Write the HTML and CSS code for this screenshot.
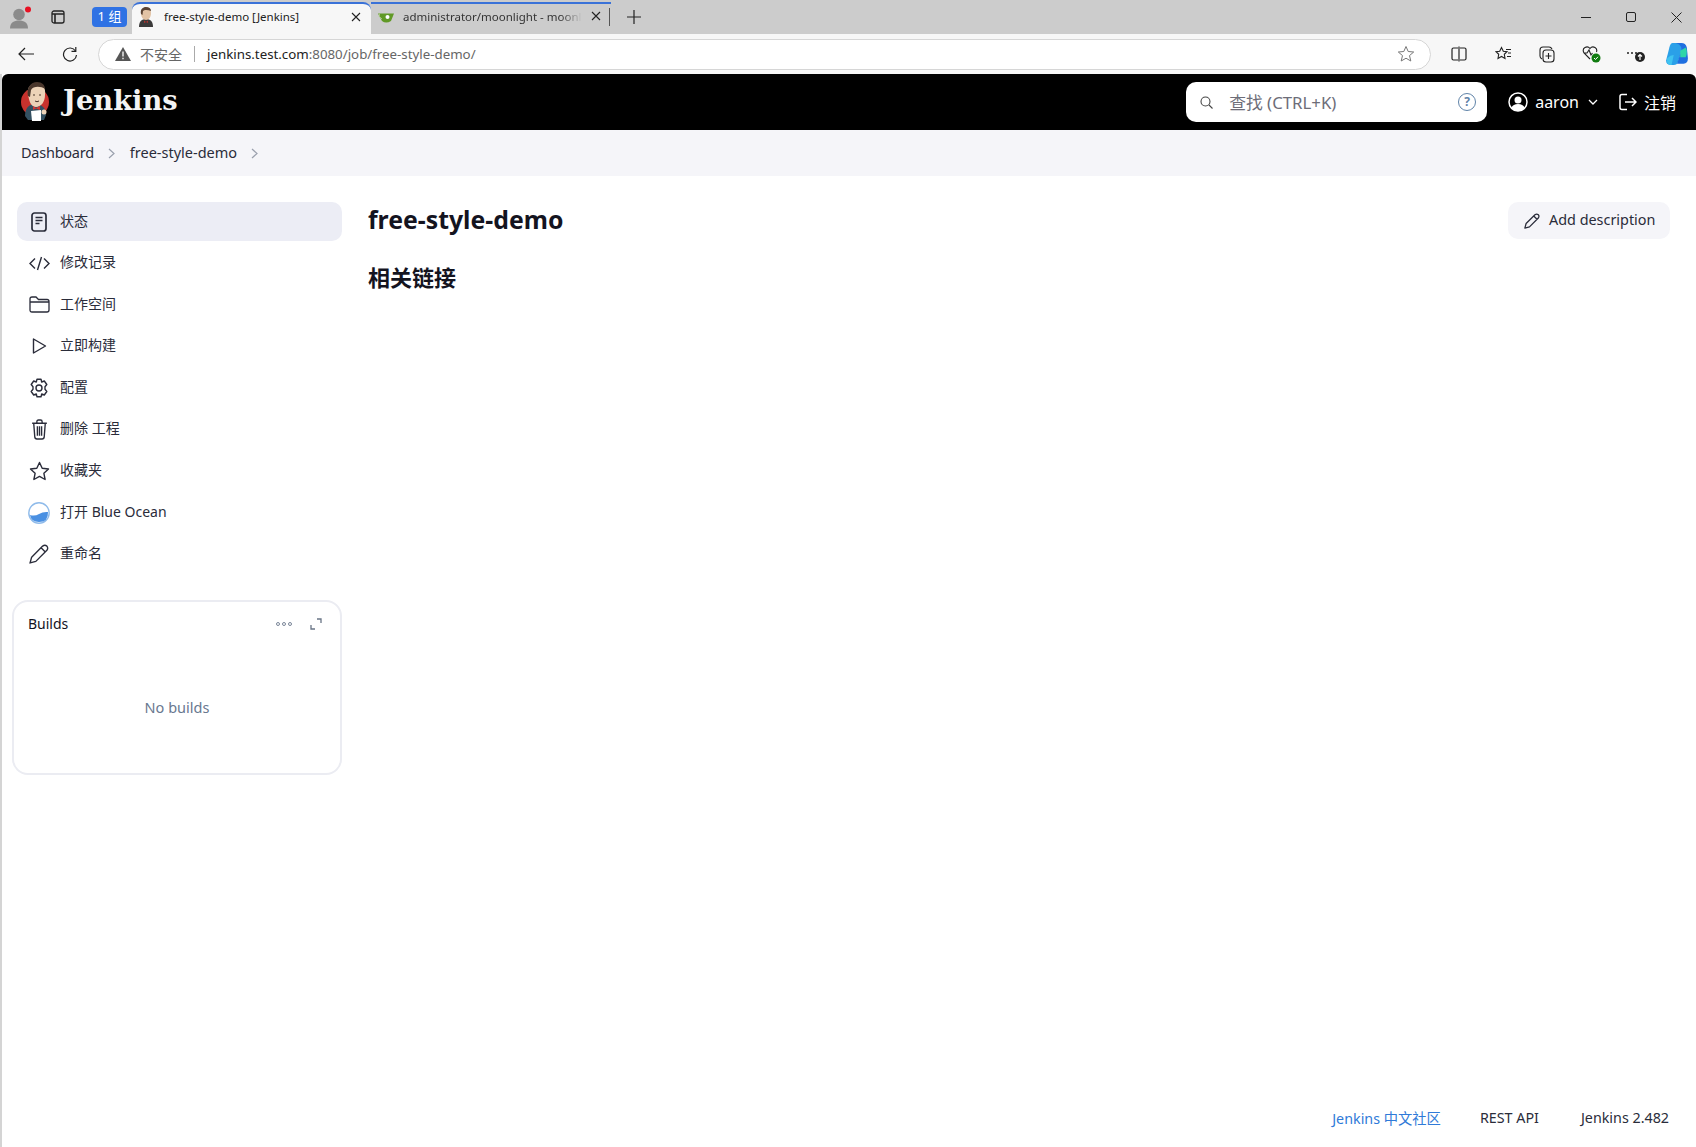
FILE: index.html
```html
<!DOCTYPE html>
<html lang="zh">
<head>
<meta charset="utf-8">
<title>free-style-demo [Jenkins]</title>
<link rel="stylesheet" href="styles.css">
</head>
<body>
<svg class="defs" width="0" height="0" aria-hidden="true">
  <symbol id="butler" viewBox="0 0 32 40">
    <circle cx="15" cy="20" r="14" fill="#c8322d"/>
    <path d="M5 34 C5 26 9 22 15 22 C22 22 26 26 26 33 L24 38 L8 38Z" fill="#335061"/>
    <path d="M8 12 C7 5 11 1 17 1 C23 1 26 6 25 13 C25 20 21 25 16 25 C11 25 9 19 8 12Z" fill="#ecd3b8"/>
    <path d="M8 14 C6 6 11 0 17 0 C22 0 25 3 25 7 C21 4 13 4 11 8 L10 15Z" fill="#49362b"/>
    <path d="M13 24 L16 26 L20 24 L20 28 L16 26.500 L13 28Z" fill="#d33833"/>
    <path d="M11 29 L21 28 L21 39 L12 39Z" fill="#fff"/>
    <circle cx="24" cy="30" r="2.500" fill="#ecd3b8"/>
    <path d="M13 13 h2 M19 13 h2 M15 19 q2 1.500 4 0" stroke="#49362b" stroke-width="1" fill="none"/>
  </symbol>
  <symbol id="butler-small" viewBox="0 0 16 20">
    <path d="M1 20 C1 14 4 12 8 12 C12 12 15 14 15 20Z" fill="#3b3a3a"/>
    <path d="M3 6 C3 2 5 .5 8 .5 C11 .5 13 2 13 6 C13 10 11 13 8 13 C5 13 3 10 3 6Z" fill="#e2c3a5"/>
    <path d="M3 7 C2 2 5 0 8 0 C11 0 13 1.500 13 4 C10 2.500 6 2.500 5 4 L4.500 8Z" fill="#5a4334"/>
    <path d="M6 13.500 L8 15 L10 13.500 V16 L8 15 L6 16Z" fill="#b3332e"/>
  </symbol>
</svg>

<div class="browser">
  <div class="tabstrip">
    <div class="strip-left">
      <span class="profile">
        <svg width="24" height="27" viewBox="0 0 24 26"><circle cx="10" cy="10" r="5.800" fill="#8b8b8b"/><path d="M1 24 C1 18 5 16 10 16 C15 16 19 18 19 24Z" fill="#8b8b8b"/><circle cx="19" cy="5" r="3" fill="#e81123"/></svg>
      </span>
      <span class="vtabs">
        <svg width="14" height="14" viewBox="0 0 14 14"><rect x="1" y="1" width="12" height="12" rx="2" fill="none" stroke="#222" stroke-width="1.300"/><path d="M1 4 H13 M4 4 V13" stroke="#222" stroke-width="1.600"/></svg>
      </span>
    </div>
    <div class="tabgroup">
      <span class="chip">1 组</span>
      <div class="tab tab-active">
        <svg class="favicon" width="16" height="20"><use href="#butler-small"/></svg>
        <span class="tab-title">free-style-demo [Jenkins]</span>
        <svg class="tabclose" width="10" height="10" viewBox="0 0 10 10"><path d="M1 1 L9 9 M9 1 L1 9" stroke="#222" stroke-width="1.100"/></svg>
      </div>
      <div class="tab tab-idle">
        <svg class="favicon" width="16" height="12" viewBox="0 0 16 12"><path d="M0 1.500 L16 1.500 L13 9 Q8 12 4 9Z" fill="#609926"/><path d="M1.500 1.500 Q0 5 4 7" fill="none" stroke="#a5c97c"/><circle cx="9.500" cy="5" r="2" fill="#fff"/></svg>
        <span class="tab-title fade">administrator/moonlight - moonl</span>
        <svg class="tabclose" width="10" height="10" viewBox="0 0 10 10"><path d="M1 1 L9 9 M9 1 L1 9" stroke="#222" stroke-width="1.100"/></svg>
      </div>
    </div>
    <span class="tabsep"></span>
    <svg class="newtab" width="14" height="14" viewBox="0 0 14 14"><path d="M7 0 V14 M0 7 H14" stroke="#222" stroke-width="1.200"/></svg>
    <div class="winctl">
      <svg width="10" height="10" viewBox="0 0 10 10"><path d="M0 5.500 H10" stroke="#222"/></svg>
      <svg width="10" height="10" viewBox="0 0 10 10"><rect x=".5" y=".5" width="9" height="9" rx="1.500" fill="none" stroke="#222"/></svg>
      <svg width="11" height="11" viewBox="0 0 11 11"><path d="M.5 .5 L10.500 10.500 M10.500 .5 L.5 10.500" stroke="#222"/></svg>
    </div>
  </div>

  <div class="addrbar">
    <svg class="nav-back" width="16" height="14" viewBox="0 0 16 14"><path d="M7 1 L1 7 L7 13 M1 7 H16" fill="none" stroke="#222" stroke-width="1.200"/></svg>
    <svg class="nav-reload" width="16" height="16" viewBox="0 0 16 16"><path d="M13.500 5 A6.500 6.500 0 1 0 14.500 9" fill="none" stroke="#222" stroke-width="1.200"/><path d="M13.800 1 V5.300 H9.500" fill="none" stroke="#222" stroke-width="1.200"/></svg>
    <div class="omnibox">
      <svg class="warn" width="16" height="14" viewBox="0 0 16 14"><path d="M8 0 L16 14 H0Z" fill="#555"/><path d="M8 4.500 V9.500 M8 10.800 V12.300" stroke="#fff" stroke-width="1.300"/></svg>
      <span class="insecure">不安全</span>
      <span class="omnisep"></span>
      <span class="url"><span class="url-host">jenkins.test.com</span>:8080/job/free-style-demo/</span>
      <svg class="omnistar" width="18" height="18" viewBox="0 0 18 18"><path d="M9 1.500 L11.200 6.500 L16.700 7 L12.500 10.600 L13.800 16 L9 13.200 L4.200 16 L5.500 10.600 L1.300 7 L6.800 6.500Z" fill="none" stroke="#777" stroke-width="1"/></svg>
    </div>
    <div class="tools">
      <svg width="16" height="16" viewBox="0 0 16 16"><path d="M7 2 H2.500 Q1 2 1 3.500 V12.500 Q1 14 2.500 14 H7 M9 2 H13.500 Q15 2 15 3.500 V12.500 Q15 14 13.500 14 H9 M8 .5 V15.500" fill="none" stroke="#222" stroke-width="1.200"/></svg>
      <svg width="17" height="16" viewBox="0 0 17 16"><path d="M6.500 1.500 L8.300 5.300 L12 5.700 L9.300 8.300 L10 12.500 L6.500 10.500 L3 12.500 L3.700 8.300 L1 5.700 L4.700 5.300Z" fill="none" stroke="#222" stroke-width="1.100"/><path d="M11 3.500 H16 M13 7 H16 M12 10.500 H16" stroke="#222" stroke-width="1.100"/></svg>
      <svg width="16" height="17" viewBox="0 0 16 17"><path d="M3 13 Q1 12 1 10 V4 Q1 1 4 1 H10 Q12 1 13 3" fill="none" stroke="#222" stroke-width="1.100"/><rect x="4" y="4" width="11" height="12" rx="3" fill="none" stroke="#222" stroke-width="1.100"/><path d="M9.500 7 V13 M6.500 10 H12.500" stroke="#222" stroke-width="1.100"/></svg>
      <svg width="19" height="18" viewBox="0 0 19 18"><path d="M8 14 L2 8 Q0 4 3 2.500 Q6 1 8 3.500 Q10 1 13 2.500 Q15.500 4 14.500 7 M2 8 H5 L7 5 L9 10 L10.500 8" fill="none" stroke="#222" stroke-width="1.100"/><circle cx="14" cy="13" r="4.500" fill="#107c10"/><path d="M12 13 L13.500 14.500 L16 11.800" fill="none" stroke="#fff"/></svg>
      <svg width="19" height="16" viewBox="0 0 19 16"><circle cx="2" cy="7" r="1" fill="#222"/><circle cx="6" cy="7" r="1" fill="#222"/><circle cx="10" cy="7" r="1" fill="#222"/><circle cx="14" cy="11" r="5" fill="#222"/><path d="M14 14 V8.500 M12 10.500 L14 8.500 L16 10.500" fill="none" stroke="#fff" stroke-width="1.200"/></svg>
      <svg width="24" height="24" viewBox="0 0 22 22"><path d="M7 1 H13 Q16 1 16.500 4 L12 18 Q11 21 8 21 H5 Q1 21 1 17 L4 5 Q5 1 7 1Z" fill="#2aa0e8"/><path d="M10 1 H15 Q19 1 20 5 L21 15 Q21 20 17 20 H11 L15 8 Q16 3 10 1Z" fill="#1f6fe0"/><path d="M14 8 L19 5 Q21 9 19 14 L14 14Z" fill="#2fd6a8"/><path d="M2 15 Q5 12 8 12 L6 21 H4 Q1 20 2 15Z" fill="#3fc3f0"/></svg>
    </div>
  </div>
</div>

<div class="page">
  <header class="jheader">
    <a class="brand">
      <svg width="32" height="40"><use href="#butler"/></svg>
      <span class="wordmark">Jenkins</span>
    </a>
    <div class="search">
      <svg class="search-ico" width="13" height="13" viewBox="0 0 13 13"><circle cx="5.500" cy="5.500" r="4.500" fill="none" stroke="#444" stroke-width="1.100"/><path d="M9 9 L12.500 12.500" stroke="#444" stroke-width="1.100"/></svg>
      <span class="placeholder">查找 (CTRL+K)</span>
      <span class="help">?</span>
    </div>
    <div class="user">
      <svg width="20" height="20" viewBox="0 0 20 20"><circle cx="10" cy="10" r="9" fill="none" stroke="#fff" stroke-width="1.500"/><circle cx="10" cy="8" r="3.500" fill="#fff"/><path d="M3.500 15.500 Q5 12 10 12 Q15 12 16.500 15.500 Q14 19 10 19 Q6 19 3.500 15.500Z" fill="#fff"/></svg>
      <span class="username">aaron</span>
      <svg width="10" height="6" viewBox="0 0 10 6"><path d="M1 1 L5 5 L9 1" fill="none" stroke="#fff" stroke-width="1.300"/></svg>
    </div>
    <div class="logout">
      <svg width="18" height="18" viewBox="0 0 18 18"><path d="M8 1.500 H3 Q1 1.500 1 3.500 V14.500 Q1 16.500 3 16.500 H8" fill="none" stroke="#fff" stroke-width="1.500"/><path d="M6 9 H17 M13 5 L17 9 L13 13" fill="none" stroke="#fff" stroke-width="1.500"/></svg>
      <span>注销</span>
    </div>
  </header>

  <nav class="crumbs">
    <span class="crumb-first">Dashboard</span>
    <svg class="crumb-chev" width="7" height="11" viewBox="0 0 7 11"><path d="M1 1 L6 5.500 L1 10" fill="none" stroke="#9aa0ad" stroke-width="1.200"/></svg>
    <span>free-style-demo</span>
    <svg class="crumb-chev" width="7" height="11" viewBox="0 0 7 11"><path d="M1 1 L6 5.500 L1 10" fill="none" stroke="#9aa0ad" stroke-width="1.200"/></svg>
  </nav>

  <div class="content">
    <aside class="side">
      <ul class="menu">
        <li class="item item-active">
          <span class="ico"><svg width="16" height="20" viewBox="0 0 16 20"><rect x="1" y="1" width="14" height="18" rx="2.500" fill="none" stroke="#2a2c3a" stroke-width="1.700"/><path d="M4.500 5.500 H11.500 M4.500 8.500 H11.500 M4.500 11.500 H8.500" stroke="#2a2c3a" stroke-width="1.500"/></svg></span>
          <span class="label">状态</span>
        </li>
        <li class="item">
          <span class="ico"><svg width="21" height="15" viewBox="0 0 21 14"><path d="M6 2 L1 7 L6 12 M15 2 L20 7 L15 12 M12.500 .5 L8.500 13.500" fill="none" stroke="#2a2c3a" stroke-width="1.400"/></svg></span>
          <span class="label">修改记录</span>
        </li>
        <li class="item">
          <span class="ico"><svg width="21" height="17" viewBox="0 0 21 17"><path d="M1 3 Q1 1 3 1 H7 L9.500 3.500 H18 Q20 3.500 20 5.500 V14 Q20 16 18 16 H3 Q1 16 1 14Z M1 6 H20" fill="none" stroke="#2a2c3a" stroke-width="1.300"/></svg></span>
          <span class="label">工作空间</span>
        </li>
        <li class="item">
          <span class="ico"><svg width="15" height="18" viewBox="0 0 15 17"><path d="M1.500 1.500 L13.500 8.500 L1.500 15.500Z" fill="none" stroke="#2a2c3a" stroke-width="1.400" stroke-linejoin="round"/></svg></span>
          <span class="label">立即构建</span>
        </li>
        <li class="item">
          <span class="ico"><svg width="20" height="20" viewBox="0 0 20 20"><path d="M8 1.200 H12 L12.700 4 L15.300 3 L17.800 6.500 L16 8.700 V11.300 L17.800 13.500 L15.300 17 L12.700 16 L12 18.800 H8 L7.300 16 L4.700 17 L2.200 13.500 L4 11.300 V8.700 L2.200 6.500 L4.700 3 L7.300 4Z" fill="none" stroke="#2a2c3a" stroke-width="1.400" stroke-linejoin="round"/><circle cx="10" cy="10" r="3" fill="none" stroke="#2a2c3a" stroke-width="1.400"/></svg></span>
          <span class="label">配置</span>
        </li>
        <li class="item">
          <span class="ico"><svg width="17" height="21" viewBox="0 0 16 20"><path d="M1 4 H15 M5.500 4 V2.500 Q5.500 1 7 1 H9 Q10.500 1 10.500 2.500 V4 M2.500 4 L3.500 17 Q3.700 19 5.500 19 H10.500 Q12.300 19 12.500 17 L13.500 4 M6 7 V16 M8 7 V16 M10 7 V16" fill="none" stroke="#2a2c3a" stroke-width="1.300"/></svg></span>
          <span class="label">删除 工程</span>
        </li>
        <li class="item">
          <span class="ico"><svg width="21" height="20" viewBox="0 0 21 20"><path d="M10.500 1.500 L13.200 7.200 L19.500 8 L14.900 12.300 L16.100 18.500 L10.500 15.400 L4.900 18.500 L6.100 12.300 L1.500 8 L7.800 7.200Z" fill="none" stroke="#2a2c3a" stroke-width="1.400" stroke-linejoin="round"/></svg></span>
          <span class="label">收藏夹</span>
        </li>
        <li class="item">
          <span class="ico"><svg width="22" height="22" viewBox="0 0 22 22"><circle cx="11" cy="11" r="10.200" fill="#fff" stroke="#8fbbea" stroke-width="1.400"/><path d="M2 13 Q7 14.500 11 12 Q15 9.500 20 10 Q20.500 20 11 20 Q3 20 2 13Z" fill="#4a90e2"/></svg></span>
          <span class="label">打开 Blue Ocean</span>
        </li>
        <li class="item">
          <span class="ico"><svg width="20" height="20" viewBox="0 0 19 19"><path d="M1 18 L2.500 12.500 L13 2 Q15 .5 17 2 Q18.500 4 17 6 L6.500 16.500Z M11.500 3.500 L15.500 7.500" fill="none" stroke="#2a2c3a" stroke-width="1.300" stroke-linejoin="round"/></svg></span>
          <span class="label">重命名</span>
        </li>
      </ul>
      <section class="card">
        <div class="card-head">
          <span class="card-title">Builds</span>
          <svg class="card-dots" width="16" height="4" viewBox="0 0 16 4"><circle cx="2" cy="2" r="1.500" fill="none" stroke="#7b8798"/><circle cx="8" cy="2" r="1.500" fill="none" stroke="#7b8798"/><circle cx="14" cy="2" r="1.500" fill="none" stroke="#7b8798"/></svg>
          <svg class="card-expand" width="12" height="12" viewBox="0 0 12 12"><path d="M7 1 H11 V5 M1 7 V11 H5" fill="none" stroke="#6a7586" stroke-width="1.300"/></svg>
        </div>
        <p class="nobuilds">No builds</p>
      </section>
    </aside>

    <main class="main">
      <div class="title-row">
        <h1>free-style-demo</h1>
        <button class="addbtn">
          <svg width="16" height="16" viewBox="0 0 19 19"><path d="M1 18 L2.500 12.500 L13 2 Q15 .5 17 2 Q18.500 4 17 6 L6.500 16.500Z M11.500 3.500 L15.500 7.500" fill="none" stroke="#2a2c3a" stroke-width="1.500" stroke-linejoin="round"/></svg>
          <span class="addbtn-text">Add description</span>
        </button>
      </div>
      <h2>相关链接</h2>
    </main>
  </div>

  <footer class="foot">
    <a class="foot-link">Jenkins 中文社区</a>
    <span class="foot-rest">REST API</span>
    <span class="foot-ver">Jenkins 2.482</span>
  </footer>
</div>
</body>
</html>
```

FILE: styles.css
```css
* { box-sizing: border-box; }
html, body { margin: 0; padding: 0; height: 100%; }
body {
  display: flex;
  flex-direction: column;
  height: 100vh;
  overflow: hidden;
  font-family: "Noto Sans", "Noto Sans CJK SC", sans-serif;
  color: #14141f;
  background: #fff;
}
.defs { position: absolute; }
svg { flex: none; display: block; }

.tabstrip {
  display: flex;
  align-items: center;
  height: 34px;
  background: #cccccc;
}
.strip-left { display: flex; align-items: center; width: 92px; padding-left: 9px; }
.vtabs { margin-left: 18px; }
.tabgroup {
  display: flex;
  align-items: flex-end;
  height: 34px;
  width: 519px;
}
.chip {
  margin: 0 5px 7px 0;
  width: 35px;
  height: 20px;
  border-radius: 4px;
  background: #2f72e4;
  color: #fff;
  font-size: 13px;
  line-height: 19px;
  text-align: center;
}
.tab {
  display: flex;
  align-items: center;
  height: 32px;
  font-size: 11.500px;
  color: #222;
  border-top: 2px solid #3a72d8;
}
.tab-active {
  width: 239px;
  padding: 0 10px 5px 6px;
  background: #f7f7f7;
  border-radius: 8px 8px 0 0;
}
.tab-idle { width: 240px; padding: 0 10px 6px 7px; margin-top: 2px; }
.favicon { margin-right: 10px; }
.tab-idle .favicon { margin: 3px 9px 0 0; }
.tab-title { flex: 1; white-space: nowrap; overflow: hidden; }
.fade {
  color: #333;
  -webkit-mask-image: linear-gradient(to right, #000 88%, transparent 100%);
  mask-image: linear-gradient(to right, #000 88%, transparent 100%);
}
.tabclose { margin-left: 4px; }
.tab-idle .tabclose { margin-left: 9px; }
.tabsep { width: 1px; height: 18px; background: #555; margin-left: -2px; }
.newtab { margin-left: 17px; }
.winctl {
  margin-left: auto;
  display: flex;
  align-items: center;
  gap: 35px;
  padding-right: 14px;
}

.addrbar {
  display: flex;
  align-items: center;
  height: 40px;
  background: #f7f7f7;
  padding-left: 18px;
  overflow: hidden;
}
.nav-reload { margin-left: 28px; }
.omnibox {
  display: flex;
  align-items: center;
  flex: none;
  margin-left: 20px;
  width: 1333px;
  height: 31px;
  background: #fff;
  border: 1px solid #d6d6d6;
  border-radius: 16px;
  padding: 0 15px 0 16px;
  font-size: 14px;
  color: #666;
}
.warn { margin-right: 9px; }
.insecure { color: #666; }
.omnisep { width: 1px; height: 16px; background: #aaa; margin: 0 12px; }
.url { flex: 1; white-space: nowrap; color: #666; font-size: 13.300px; }
.url-host { color: #222; }
.tools {
  flex: none;
  display: grid;
  grid-template-columns: repeat(5, 44px) 39px;
  align-items: center;
  justify-items: center;
  margin-left: 6px;
}

.page {
  flex: 1;
  min-height: 0;
  display: flex;
  flex-direction: column;
  border-left: 2px solid #d4d4d4;
}
.jheader {
  display: flex;
  align-items: center;
  height: 56px;
  background: #000;
  color: #fff;
  padding: 0 20px 0 18px;
  border-radius: 6px 6px 0 0;
}
.brand { display: flex; align-items: center; gap: 11px; margin-right: auto; }
.wordmark {
  font-family: "DejaVu Serif", serif;
  font-weight: 700;
  font-size: 27.300px;
  color: #f3f3f3;
  padding-bottom: 4px;
}
.search {
  display: flex;
  align-items: center;
  width: 301px;
  height: 40px;
  background: #fff;
  border-radius: 10px;
  padding: 0 11px 0 14px;
}
.search-ico { margin-right: 16px; }
.placeholder { flex: 1; font-size: 16.800px; color: #6d6d78; padding-bottom: 1px; }
.help {
  width: 18px;
  height: 18px;
  border: 1.500px solid #5f83a8;
  border-radius: 50%;
  color: #5f83a8;
  font-size: 12px;
  font-weight: 700;
  line-height: 15px;
  text-align: center;
}
.user { display: flex; align-items: center; gap: 7px; margin-left: 21px; font-size: 16px; }
.username { margin-right: 2px; }
.logout { display: flex; align-items: center; gap: 7px; margin-left: 21px; font-size: 16px; }

.crumbs {
  display: flex;
  align-items: center;
  height: 46px;
  background: #f5f5f9;
  padding: 0 0 2px 19px;
  font-size: 14.500px;
  color: #2a2c3a;
}
.crumb-first { letter-spacing: -.25px; }
.crumb-chev { margin: 2px 15px 0 14px; }

.content { flex: 1; min-height: 0; display: flex; }
.side { width: 340px; flex: none; padding: 26px 0 0 15px; }
.menu {
  list-style: none;
  margin: 0;
  padding: 0;
  display: flex;
  flex-direction: column;
  gap: 2.600px;
}
.item {
  display: flex;
  align-items: center;
  gap: 10px;
  height: 39px;
  padding-left: 11px;
  border-radius: 10px;
  font-size: 14px;
  color: #2a2c3a;
}
.label { padding-bottom: 4px; }
.item-active { background: #ecedf5; }
.ico {
  width: 22px;
  display: flex;
  justify-content: center;
  align-items: center;
}
.card {
  margin: 26px 0 0 -5px;
  width: 330px;
  height: 175px;
  border: 2px solid #ebecf2;
  border-radius: 16px;
  padding: 12px 14px;
}
.card-head { display: flex; align-items: center; font-size: 14px; }
.card-title { flex: 1; }
.card-dots { margin: 2px 18px 0 0; }
.card-expand { margin: 2px 4px 0 0; }
.nobuilds {
  margin: 64px 0 0;
  text-align: center;
  font-size: 14.500px;
  color: #69788f;
}

.main { flex: 1; padding: 26px 26px 0 26px; }
.title-row {
  display: flex;
  align-items: center;
  justify-content: space-between;
  height: 37px;
}
h1 { margin: 0; padding-bottom: 4px; font-size: 24.800px; font-weight: 700; }
.addbtn {
  display: flex;
  align-items: center;
  gap: 9px;
  width: 162px;
  height: 37px;
  padding: 0 0 0 16px;
  border: 0;
  border-radius: 10px;
  background: #f5f5f9;
  font: inherit;
  font-size: 14.400px;
  color: #2a2c3a;
}
.addbtn-text { padding-bottom: 2px; }
h2 { margin: 21px 0 0; font-size: 22px; font-weight: 700; }

.foot {
  display: flex;
  align-items: center;
  justify-content: flex-end;
  height: 58px;
  padding: 0 27px 2px 0;
  font-size: 14.300px;
  color: #2a2c3a;
}
.foot-link { color: #2f7ad8; }
.foot-rest { margin-left: 39px; }
.foot-ver { margin-left: 42px; }
```
